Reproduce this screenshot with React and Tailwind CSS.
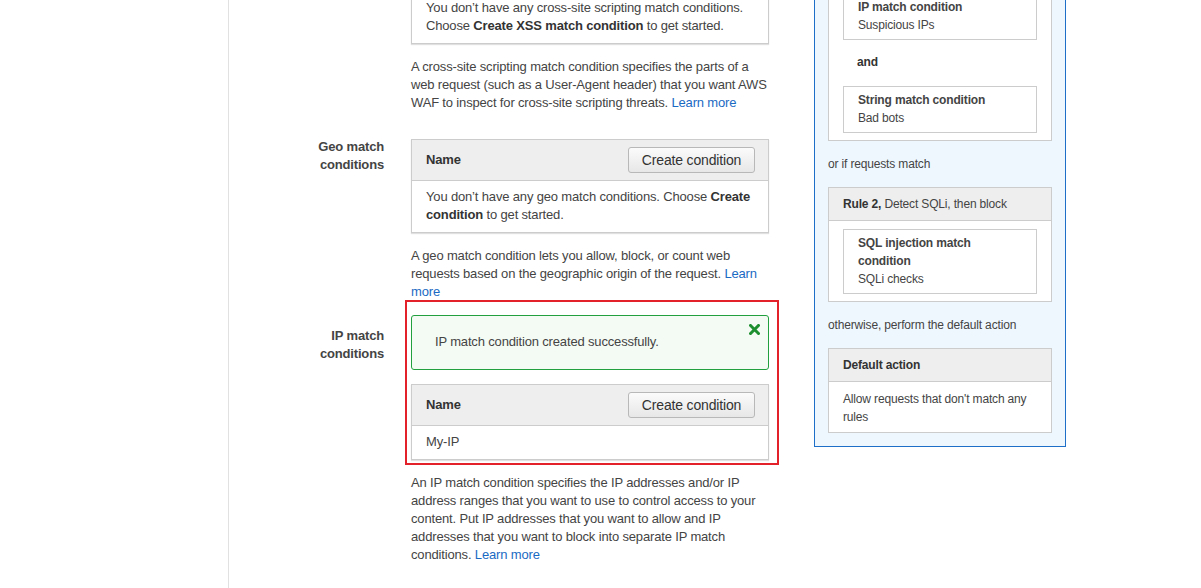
import React from 'react';

function CreateButton() {
  return (
    <button
      type="button"
      className="w-[127px] h-[26px] rounded-[3px] border border-[#b8b8b8] bg-gradient-to-b from-[#fbfbfb] to-[#e7e7e7] text-[14px] text-[#333] flex items-center justify-center"
    >
      Create condition
    </button>
  );
}

function ConditionTable({ children }) {
  return (
    <div className="border border-[#ccc] bg-white shadow-[0_1px_1px_rgba(0,0,0,0.12)]">
      <div className="flex items-center justify-between bg-[#eee] border-b border-[#ccc] pl-[14px] pr-[13px] py-[7px]">
        <span className="font-bold text-[13px] text-[#333]">Name</span>
        <CreateButton />
      </div>
      <div className="px-[14px] pt-[7px] pb-[8px] text-[13px] leading-[18px] text-[#444]">
        {children}
      </div>
    </div>
  );
}

function LearnMore() {
  return <a href="#" className="text-[#1a6ac3]">Learn more</a>;
}

function Help({ children }) {
  return <p className="mt-[14px] text-[13px] leading-[18px] text-[#444]">{children}</p>;
}

function Row({ label, labelClass = '', children }) {
  return (
    <div className="flex gap-[27px]">
      <div className={`w-[155px] shrink-0 text-right font-bold text-[13px] leading-[18px] text-[#444] ${labelClass}`}>
        {label}
      </div>
      <div className="w-[358px] shrink-0">{children}</div>
    </div>
  );
}

function RuleBox({ title, bodyClass = 'pt-[8px] pb-[7px]', children }) {
  return (
    <div className="border border-[#ccc] bg-white">
      <div className="bg-[#eee] border-b border-[#ccc] px-[14px] py-[7px]">{title}</div>
      <div className={`px-[14px] ${bodyClass}`}>{children}</div>
    </div>
  );
}

function CondBox({ type, name }) {
  return (
    <div className="border border-[#ccc] bg-white pl-[14px] pr-[10px] pt-[4px] pb-[5px]">
      <div className="font-bold">{type}</div>
      <div>{name}</div>
    </div>
  );
}

function CloseIcon() {
  return (
    <svg width="11" height="11" viewBox="0 0 11 11" className="absolute top-[8px] right-[8px]">
      <path d="M1.5 1.5 L9.5 9.5 M9.5 1.5 L1.5 9.5" stroke="#1d8f2f" strokeWidth="3" strokeLinecap="square" />
    </svg>
  );
}

export default function App() {
  return (
    <div className="flex h-[588px] w-full overflow-hidden bg-white tracking-[-0.16px] font-['Liberation_Sans',Arial,sans-serif]">
      <div className="w-[229px] shrink-0 border-r border-[#e1e1e1]" />

      <div className="flex items-start">
        {/* Form column */}
        <div className="-mt-[50px] flex flex-col">
          <Row label="">
            <ConditionTable>
              You don’t have any cross-site scripting match conditions. Choose{' '}
              <b className="text-[#333]">Create XSS match condition</b> to get started.
            </ConditionTable>
            <Help>
              A cross-site scripting match condition specifies the parts of a web request (such as a
              User-Agent header) that you want AWS WAF to inspect for cross-site scripting threats.{' '}
              <LearnMore />
            </Help>
          </Row>

          <div className="mt-[27px]">
            <Row label={<>Geo match<br />conditions</>} labelClass="-mt-[1px]">
              <ConditionTable>
                You don’t have any geo match conditions. Choose{' '}
                <b className="text-[#333]">Create condition</b> to get started.
              </ConditionTable>
              <Help>
                A geo match condition lets you allow, block, or count web requests based on the
                geographic origin of the request. <LearnMore />
              </Help>
            </Row>
          </div>

          <div className="mt-[14px]">
            <Row label={<>IP match<br />conditions</>} labelClass="pt-[12px]">
              <div className="relative">
                <div className="relative rounded-[3px] border border-[#22a03f] bg-[#f4fbf4] pl-[23px] pt-[17px] pb-[18px] text-[13px] leading-[18px] text-[#444]">
                  IP match condition created successfully.
                  <CloseIcon />
                </div>
                <div className="mt-[14px]">
                  <ConditionTable>My-IP</ConditionTable>
                </div>
                <div className="pointer-events-none absolute -top-[15px] -left-[6px] -right-[10px] -bottom-[5px] border-2 border-[#e3212b]" />
              </div>
              <Help>
                An IP match condition specifies the IP addresses and/or IP address ranges that you
                want to use to control access to your content. Put IP addresses that you want to
                allow and IP addresses that you want to block into separate IP match conditions.{' '}
                <LearnMore />
              </Help>
            </Row>
          </div>
        </div>

        {/* Web ACL summary panel */}
        <div className="-mt-[63px] ml-[45px] w-[252px] shrink-0 border border-[#1e6fc8] bg-[#eff7fe] px-[13px] py-[13px] text-[12px] leading-[18px] text-[#444]">
          <RuleBox title={<><b className="text-[#333]">Rule 1,</b> Block suspicious bad bots</>}>
            <CondBox type="IP match condition" name="Suspicious IPs" />
            <div className="mt-[13px] mb-[15px] pl-[14px] font-bold text-[#333]">and</div>
            <CondBox type="String match condition" name="Bad bots" />
          </RuleBox>

          <div className="my-[14px]">or if requests match</div>

          <RuleBox title={<><b className="text-[#333]">Rule 2,</b> Detect SQLi, then block</>}>
            <CondBox type="SQL injection match condition" name="SQLi checks" />
          </RuleBox>

          <div className="my-[14px]">otherwise, perform the default action</div>

          <RuleBox
            title={<b className="text-[#333]">Default action</b>}
            bodyClass="pt-[8px] pb-[6px]"
          >
            Allow requests that don't match any rules
          </RuleBox>
        </div>
      </div>
    </div>
  );
}
